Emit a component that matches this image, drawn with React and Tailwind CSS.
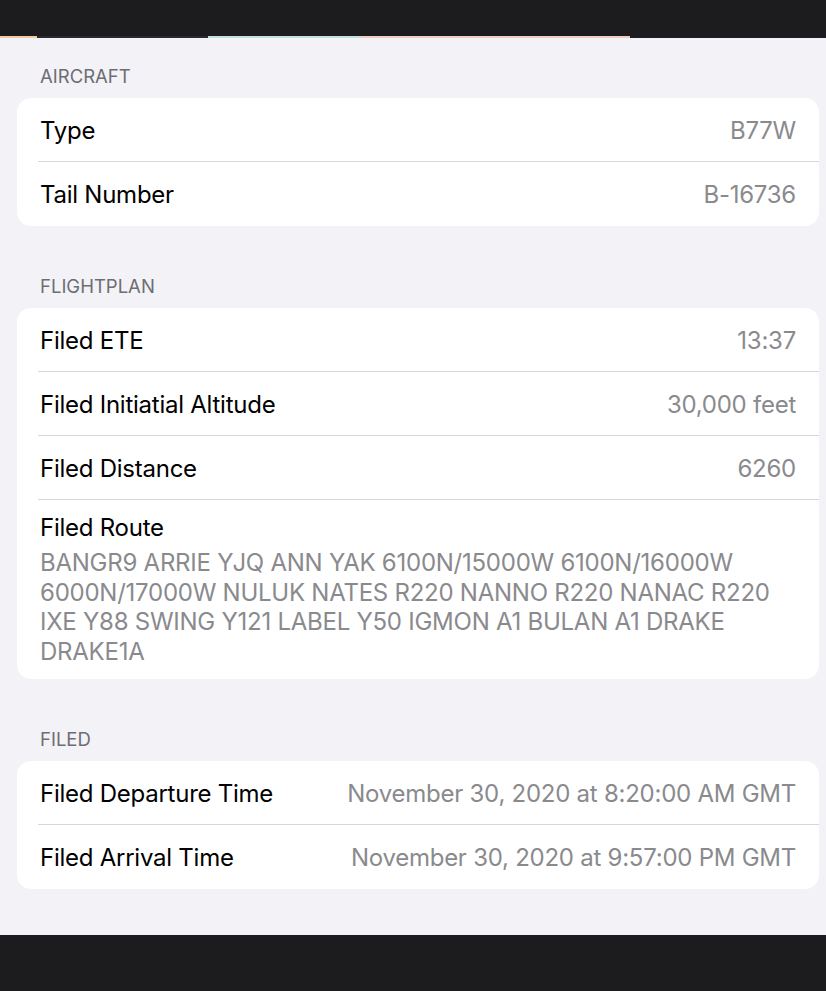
const sections = [
  {
    title: "AIRCRAFT",
    rows: [
      { label: "Type", value: "B77W" },
      { label: "Tail Number", value: "B-16736" },
    ],
  },
  {
    title: "FLIGHTPLAN",
    rows: [
      { label: "Filed ETE", value: "13:37" },
      { label: "Filed Initiatial Altitude", value: "30,000 feet" },
      { label: "Filed Distance", value: "6260" },
    ],
    route:
      "BANGR9 ARRIE YJQ ANN YAK 6100N/15000W 6100N/16000W 6000N/17000W NULUK NATES R220 NANNO R220 NANAC R220 IXE Y88 SWING Y121 LABEL Y50 IGMON A1 BULAN A1 DRAKE DRAKE1A",
  },
  {
    title: "FILED",
    rows: [
      { label: "Filed Departure Time", value: "November 30, 2020 at 8:20:00 AM GMT" },
      { label: "Filed Arrival Time", value: "November 30, 2020 at 9:57:00 PM GMT" },
    ],
  },
];

const Row = ({ label, value, last }) => (
  <div className="pl-[21px]">
    <div
      className={`h-16 flex items-center justify-between pl-[2px] pr-[23px] pt-[2px] ${
        last ? "" : "border-b border-[#d8d8dc]"
      }`}
    >
      <span className="text-black">{label}</span>
      <span className="text-[#8a8a8e]">{value}</span>
    </div>
  </div>
);

export default function App() {
  return (
    <div
      className="w-[826px] h-[991px] bg-[#f2f2f7] flex flex-col text-[24px] tracking-[-0.25px]"
      style={{ fontFamily: "Inter, 'Noto Sans', sans-serif" }}
    >
      {/* status bar */}
      <div className="h-9 shrink-0 bg-[#1c1c1e]" />
      {/* tinted strip under the status bar */}
      <div className="h-[2px] shrink-0 flex">
        <div className="w-[37px] bg-[#f3c9a0]" />
        <div className="w-[171px] bg-[#2a2a2c]" />
        <div className="w-[152px] bg-[#bfe3dc]" />
        <div className="w-[270px] bg-[#f2cdbd]" />
        <div className="flex-1 bg-[#1c1c2a]" />
      </div>

      <div className="flex-1 min-h-0 flex flex-col gap-[50px] pl-[17px] pr-[7px] pt-[28px]">
        {sections.map((s) => (
          <div key={s.title}>
            <div className="pl-[23px] h-[22px] flex items-center text-[18.5px] tracking-normal text-[#6d6d72] mb-[10px]">
              {s.title}
            </div>
            <div className="bg-white rounded-[14px] overflow-hidden">
              {s.rows.map((r, i) => (
                <Row
                  key={r.label}
                  label={r.label}
                  value={r.value}
                  last={!s.route && i === s.rows.length - 1}
                />
              ))}
              {s.route && (
                <div className="pl-[23px] pr-[23px] pt-[13px] pb-[13px]">
                  <div className="text-black leading-[30px]">Filed Route</div>
                  <div className="text-[#8a8a8e] leading-[29.5px] mt-[5px]">
                    {s.route}
                  </div>
                </div>
              )}
            </div>
          </div>
        ))}
      </div>

      <div className="h-[56px] shrink-0 bg-[#1c1c1e]" />
    </div>
  );
}
